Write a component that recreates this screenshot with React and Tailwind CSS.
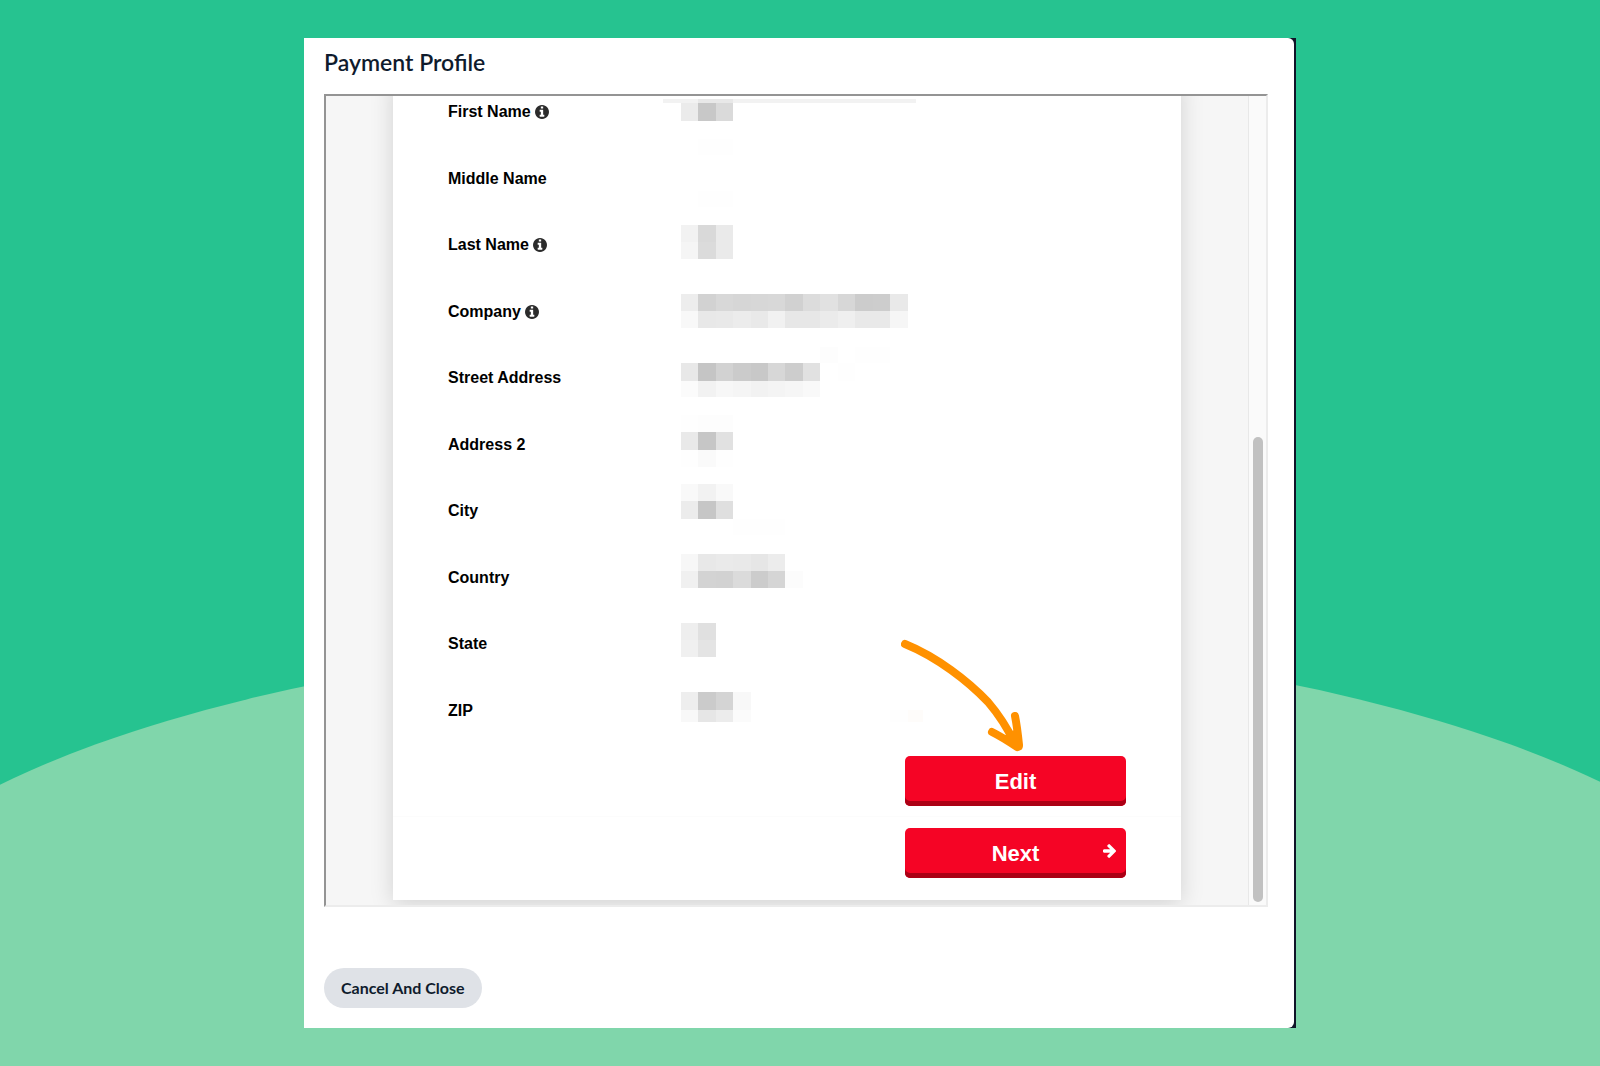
const fields = [
  { label: 'First Name', info: true },
  { label: 'Middle Name' },
  { label: 'Last Name', info: true },
  { label: 'Company', info: true },
  { label: 'Street Address' },
  { label: 'Address 2' },
  { label: 'City' },
  { label: 'Country' },
  { label: 'State' },
  { label: 'ZIP' },
]

// Redacted values: top, height, first column and the grey level of each block
const blocks = [
  { y: 24, h: 18, tones: ['ebebeb', 'c8c8c8', 'dadada'] },
  { y: 60, h: 16, from: 1, tones: ['fefefe', 'fefefe'] },
  { y: 112, h: 16, from: 1, tones: ['fefefe', 'fefefe'] },
  { y: 146, h: 17, tones: ['f2f2f2', 'd9d9d9', 'eaeaea'] },
  { y: 163, h: 17, tones: ['f5f5f5', 'dbdbdb', 'eaeaea'] },
  { y: 215, h: 17, tones: ['ededed', 'd2d2d2', 'd8d8d8', 'd6d6d6', 'd7d7d7', 'd8d8d8', 'd1d1d1', 'dcdcdc', 'e1e1e1', 'd7d7d7', 'cccccc', 'cdcdcd', 'e9e9e9'] },
  { y: 232, h: 17, tones: ['f8f8f8', 'e8e8e8', 'e9e9e9', 'ececec', 'e9e9e9', 'f1f1f1', 'e7e7e7', 'e7e7e7', 'ebebeb', 'efefef', 'e9e9e9', 'e9e9e9', 'f6f6f6'] },
  { y: 268, h: 16, from: 8, tones: ['fdfdfd', 'ffffff', 'fefefe', 'fefefe'] },
  { y: 284, h: 18, tones: ['e8e8e8', 'c5c5c5', 'd2d2d2', 'cbcbcb', 'c8c8c8', 'd7d7d7', 'cdcdcd', 'e1e1e1', 'ffffff', 'fefefe'] },
  { y: 302, h: 16, tones: ['fbfbfb', 'f2f2f2', 'f7f7f7', 'f5f5f5', 'f2f2f2', 'f4f4f4', 'f6f6f6', 'f9f9f9'] },
  { y: 336, h: 17, tones: ['fefefe', 'fdfdfd', 'fdfdfd'] },
  { y: 353, h: 18, tones: ['e9e9e9', 'c6c6c6', 'e1e1e1'] },
  { y: 371, h: 17, tones: ['fefefe', 'fafafa', 'fefefe'] },
  { y: 405, h: 17, tones: ['f9f9f9', 'f2f2f2', 'f9f9f9'] },
  { y: 422, h: 18, tones: ['ececec', 'c6c6c6', 'dfdfdf'] },
  { y: 440, h: 16, from: 3, tones: ['fefefe', 'fefefe', 'fefefe'] },
  { y: 475, h: 17, tones: ['f7f7f7', 'e8e8e8', 'eaeaea', 'e9e9e9', 'e6e6e6', 'ececec'] },
  { y: 492, h: 17, tones: ['f0f0f0', 'd3d3d3', 'd2d2d2', 'dbdbdb', 'cccccc', 'd5d5d5', 'fcfcfc'] },
  { y: 544, h: 17, tones: ['eeeeee', 'e0e0e0'] },
  { y: 561, h: 17, tones: ['f0f0f0', 'e4e4e4'] },
  { y: 613, h: 18, tones: ['eeeeee', 'cbcbcb', 'd4d4d4', 'f8f8f8'] },
  { y: 631, h: 12, tones: ['f8f8f8', 'e6e6e6', 'ececec', 'fbfbfb'] },
  { y: 631, h: 12, from: 12, tones: ['fefefe', 'fefcfa'] },
]

const columnX = (i) => Math.round(17.6 + i * 17.48)

function RedactedValues() {
  return (
    <svg
      viewBox="0 0 260 665"
      className="h-[665px] w-[260px] shrink-0"
      shapeRendering="crispEdges"
      aria-hidden="true"
    >
      <rect x="0" y="20" width="253" height="4" fill="#f2f2f2" />
      <rect x="35" y="20" width="35" height="4" fill="#e8e8e8" />
      {blocks.map(({ y, h, from = 0, tones }) =>
        tones.map((tone, i) => (
          <rect
            key={`${y}-${from + i}`}
            x={columnX(from + i)}
            y={y}
            width={columnX(from + i + 1) - columnX(from + i)}
            height={h}
            fill={`#${tone}`}
          />
        ))
      )}
    </svg>
  )
}

function Backdrop() {
  return (
    <svg
      viewBox="0 0 1600 1066"
      preserveAspectRatio="none"
      className="absolute inset-0 h-full w-full"
      aria-hidden="true"
    >
      <rect width="1600" height="1066" fill="#26c390" />
      <ellipse cx="803" cy="1001" rx="1000" ry="363" fill="#80d6ab" />
    </svg>
  )
}

function InfoIcon() {
  return (
    <svg viewBox="128 128 1536 1536" className="size-[14px]" fill="#2b2b2b" aria-hidden="true">
      <path d="M1152 1376v-160q0-14-9-23t-23-9h-96V672q0-14-9-23t-23-9H672q-14 0-23 9t-9 23v160q0 14 9 23t23 9h96v320h-96q-14 0-23 9t-9 23v160q0 14 9 23t23 9h448q14 0 23-9t9-23zm-128-896V320q0-14-9-23t-23-9H800q-14 0-23 9t-9 23v160q0 14 9 23t23 9h192q14 0 23-9t9-23zm640 416q0 209-103 385.500T1281.500 1561 896 1664t-385.500-103T231 1281.500 128 896t103-385.500T510.500 231 896 128t385.500 103T1561 510.500 1664 896z" />
    </svg>
  )
}

function ArrowIcon() {
  return (
    <svg
      viewBox="0 180 1472 1560"
      className="absolute top-4 right-[10px] h-[14px] w-[13px]"
      fill="currentColor"
      aria-hidden="true"
    >
      <path d="M1472 960q0 54-37 91l-651 651q-39 37-91 37-51 0-90-37l-75-75q-38-38-38-91t38-91l293-293H117q-52 0-84.500-37.500T0 1024V896q0-53 32.500-90.500T117 768h704L528 474q-38-36-38-90t38-90l75-75q38-38 90-38 53 0 91 38l651 651q37 35 37 90z" />
    </svg>
  )
}

function Pointer() {
  return (
    <svg
      viewBox="0 0 126 116"
      className="absolute bottom-full left-0 -ml-1 mb-1 h-[116px] w-[126px]"
      fill="none"
      stroke="#ff9100"
      strokeLinecap="round"
      strokeLinejoin="round"
      aria-hidden="true"
    >
      <path d="M4 8C36 21 67 45 87 66C99 80 107 93 114 108" strokeWidth="8" />
      <path d="M91 96C99 100 107 105 116 111" strokeWidth="8" />
      <path d="M114 80C116 90 117 99 118 109" strokeWidth="8" />
      <path d="M113 98L118 111L106 102Z" fill="#ff9100" strokeWidth="7" />
    </svg>
  )
}

const buttonClass =
  'relative h-[50px] w-[221px] rounded-[5px] bg-[#f50425] pt-px text-[22px] leading-6 font-bold text-white shadow-[inset_0_-5px_0_#ab0015]'

export default function App() {
  return (
    <div className="relative flex h-screen min-h-[1000px] justify-center py-[38px]">
      <Backdrop />

      <div className="relative flex w-[62%] bg-[#101428] pr-[2px]">
        <main className="flex min-w-0 flex-1 flex-col rounded-r-md bg-white pt-2 pr-[26px] pb-[20px] pl-[20px] font-['Lato',sans-serif] text-[#0f1b2d]">
          <h1 className="text-[23px] leading-8 font-semibold">Payment Profile</h1>

          <section className="mt-4 flex flex-1 overflow-hidden border-2 border-t-[#949494] border-r-[#ececec] border-b-[#ececec] border-l-[#949494] bg-[#f6f6f6] font-['Liberation_Sans',Arial,sans-serif] text-black">
            <div className="flex min-w-0 flex-1 flex-col justify-end pr-[67px] pb-[5px] pl-[67px]">
              <div className="bg-white pb-[22px] shadow-[0_4px_22px_rgba(0,0,0,0.15)]">
                <div className="flex pl-[55px]">
                  <ul className="grid h-[665px] w-[215px] shrink-0 auto-rows-fr">
                    {fields.map((field) => (
                      <li key={field.label} className="flex items-center gap-1 text-base font-bold">
                        {field.label}
                        {field.info && <InfoIcon />}
                      </li>
                    ))}
                  </ul>
                  <RedactedValues />
                </div>

                <div className="flex justify-end border-b border-[#fcfcfc] pt-3 pr-[55px] pb-[10px]">
                  <div className="relative">
                    <Pointer />
                    <button type="button" className={buttonClass}>
                      Edit
                    </button>
                  </div>
                </div>
                <div className="flex justify-end pt-[11px] pr-[55px]">
                  <button type="button" className={buttonClass}>
                    Next
                    <ArrowIcon />
                  </button>
                </div>
              </div>
            </div>

            {/* Scrollbar */}
            <div className="flex w-[18px] flex-col justify-end border-l border-[#e8e8e8] bg-[#fafafa] pr-[3px] pb-[3px] pl-1">
              <div className="h-[465px] rounded-full bg-[#c1c1c1]" />
            </div>
          </section>

          <div className="mt-[61px]">
            <button
              type="button"
              className="h-10 rounded-full bg-[#dfe2e7] px-[17px] text-base font-bold text-[#0f1b2d]"
            >
              Cancel And Close
            </button>
          </div>
        </main>
      </div>
    </div>
  )
}
